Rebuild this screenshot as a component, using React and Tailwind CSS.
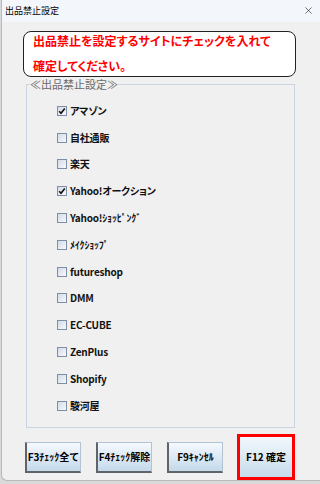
import { X } from "lucide-react";

const sites = [
  { name: "アマゾン", checked: true },
  { name: "自社通販", checked: false },
  { name: "楽天", checked: false },
  { name: "Yahoo!オークション", checked: true },
  { name: "Yahoo!ｼｮｯﾋﾟﾝｸﾞ", checked: false },
  { name: "ﾒｲｸｼｮｯﾌﾟ", checked: false },
  { name: "futureshop", checked: false },
  { name: "DMM", checked: false },
  { name: "EC-CUBE", checked: false },
  { name: "ZenPlus", checked: false },
  { name: "Shopify", checked: false },
  { name: "駿河屋", checked: false },
];

// checkbox ------------------
const CheckBox = ({ checked }) => (
  <span className="w-[10px] h-[10px] border border-[#7d8ea5] bg-gradient-to-br from-[#d3dbe6] to-[#f7f9fc] flex items-center justify-center">
    {checked && (
      <svg width="8" height="8" viewBox="0 0 8 8">
        <path d="M1.2 4.2 L3 6.2 L6.8 1.5" fill="none" stroke="#111" strokeWidth="1.6" />
      </svg>
    )}
  </span>
);

const FuncButton = ({ label }) => (
  <button className="w-[56px] h-[31px] border-t border-r border-[#b3c3d3] border-l-2 border-l-[#5f646a] border-b-2 border-b-[#5f646a] bg-gradient-to-b from-[#f5f9fd] to-[#c4d9eb] text-[10px] font-bold text-black leading-none whitespace-nowrap">
    {label}
  </button>
);

const App = () => {
  return (
    <div
      className="w-[320px] h-[484px] bg-[#dadada] overflow-hidden"
      style={{ fontFamily: '"Noto Sans CJK JP", "Noto Sans", sans-serif' }}
    >
      <div className="h-[481px] ml-[1px] bg-[#f0f0f0] border-l border-b border-[#b9b9b9] rounded-bl-[6px] flex flex-col">
        {/* title bar */}
        <div className="h-[22px] bg-[#f3f6fb] flex items-center justify-between pl-[3px] pr-[6px]">
          <span className="text-[9px] text-black">出品禁止設定</span>
          <X size={11} strokeWidth={1.4} className="text-[#222]" />
        </div>

        {/* message */}
        <div className="mt-[9px] ml-[21px] w-[273px] h-[47px] bg-white border border-[#222] rounded-[8px] pl-[9px] text-[12px] font-bold text-[#ff0000] [font-feature-settings:'palt']">
          <div className="h-[18px] leading-[18px]">
            出品禁止を設定するサイトにチェックを入れて
          </div>
          <div className="mt-[7px] h-[18px] leading-[18px]">確定してください。</div>
        </div>

        {/* group */}
        <fieldset className="mt-[1px] ml-[24px] w-[269px] border border-[#cbd5e2] p-0 pb-[8px]">
          <legend className="ml-[3px] text-[11px] leading-[12px] text-[#6a6a6a]">
            ≪出品禁止設定≫
          </legend>
          <div className="pl-[30px] pt-[7px] flex flex-col">
            {sites.map((item) => (
              <div key={item.name} className="h-[26.8px] flex items-center gap-[3px]">
                <CheckBox checked={item.checked} />
                <span className="text-[10px] font-semibold text-[#111] leading-none tracking-[-0.2px] [font-feature-settings:'palt']">
                  {item.name}
                </span>
              </div>
            ))}
          </div>
        </fieldset>

        {/* buttons */}
        <div className="mt-[6px] h-[46px] pl-[23px] flex items-center">
          <FuncButton label="F3ﾁｪｯｸ全て" />
          <div className="ml-[15px]">
            <FuncButton label="F4ﾁｪｯｸ解除" />
          </div>
          <div className="ml-[15px]">
            <FuncButton label="F9ｷｬﾝｾﾙ" />
          </div>
          <button className="ml-[14px] w-[58px] h-[46px] border-[3px] border-[#ff0000] bg-gradient-to-b from-[#f2f8fd] to-[#c6dbec] text-[10px] font-bold text-black leading-none whitespace-nowrap">
            F12 確定
          </button>
        </div>
      </div>
    </div>
  );
};

export default App;
